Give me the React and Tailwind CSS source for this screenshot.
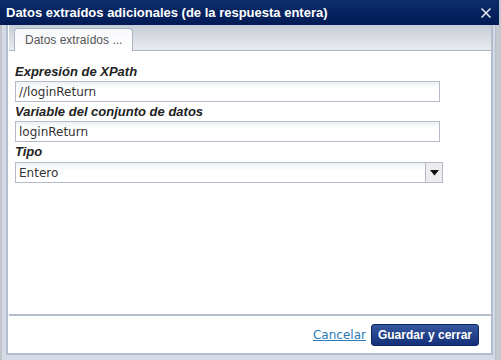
import React from "react";

function Label({ children }) {
  return (
    <label className="text-[13px] font-bold italic text-[#222] leading-[19px] h-[19px] [font-family:'Liberation_Sans',sans-serif]">
      {children}
    </label>
  );
}

function Field({ label, value }) {
  return (
    <div className="flex flex-col">
      <Label>{label}</Label>
      <div className="h-[21px] w-[425px] border border-[#b5bac9] bg-gradient-to-b from-[#eef0f2] to-white to-40% flex items-center pl-[3px] text-[12px] text-[#333] [font-family:'DejaVu_Sans',sans-serif]">
        {value}
      </div>
    </div>
  );
}

function SelectField({ label, value }) {
  return (
    <div className="flex flex-col">
      <Label>{label}</Label>
      <div className="mt-px h-[21px] w-[428px] border border-[#b5bac9] bg-gradient-to-b from-[#eef0f2] to-white to-40% flex items-center text-[12px] text-[#333] [font-family:'DejaVu_Sans',sans-serif]">
        <span className="flex-1 pl-[3px]">{value}</span>
        <span className="w-[17px] h-full border-l border-[#b5bac9] bg-[#ededed] flex items-center justify-center">
          <svg width="9" height="6" viewBox="0 0 9 6">
            <path d="M0 0h9L4.5 5.5z" fill="#111" />
          </svg>
        </span>
      </div>
    </div>
  );
}

export default function App() {
  return (
    <div className="w-[501px] h-[360px] bg-[#c4c8cf] flex overflow-hidden">
      <div className="w-[496px] h-[360px] flex flex-col bg-[#d5dbe6] border-l-2 border-[#c2c5cb] border-r border-r-[#b9c0cb]">
        {/* Title bar */}
        <div className="h-[25px] shrink-0 bg-gradient-to-b from-[#0e2d6a] to-[#021a55] flex items-center justify-between pl-[6px] pr-[8px] -ml-[2px] w-[499px]">
          <span className="text-white font-bold text-[13px] whitespace-nowrap [font-family:'Liberation_Sans',sans-serif]">
            Datos extraídos adicionales (de la respuesta entera)
          </span>
          <svg width="10" height="10" viewBox="0 0 10 10">
            <path d="M0.5 0.5L9.5 9.5M9.5 0.5L0.5 9.5" stroke="#e8ecf4" strokeWidth="1.5" />
          </svg>
        </div>

        {/* Body */}
        <div className="flex-1 flex flex-col ml-[4px] mr-[2px] mb-[5px] border-x-2 border-b-2 border-[#b3bdcc] bg-white">
          {/* Tab panel */}
          <div className="h-[291px] flex flex-col border-b-2 border-r-2 border-[#b3bdcc] ml-[1px] -mr-[2px]">
            <div className="h-[26px] shrink-0 bg-gradient-to-b from-[#c6ccd7] to-[#eaecef] border-b border-[#aab6c8] flex items-end pl-[5px]">
              <div className="h-[23px] w-[119px] -mb-px rounded-t-[4px] border border-b-0 border-[#a9b5c6] bg-gradient-to-b from-[#f6f7f9] to-white flex items-center pl-[10px] text-[12px] text-[#555] whitespace-nowrap [font-family:'Liberation_Sans',sans-serif]">
                Datos extraídos ...
              </div>
            </div>
            <div className="flex-1 bg-white pl-[6px] pt-[11px] flex flex-col">
              <Field label="Expresión de XPath" value="//loginReturn" />
              <Field label="Variable del conjunto de datos" value="loginReturn" />
              <SelectField label="Tipo" value="Entero" />
            </div>
          </div>
          {/* Footer */}
          <div className="flex-1 flex items-center justify-end pr-[12px] gap-[5px]">
            <a href="#" className="text-[12px] text-[#2a7bb5] underline [font-family:'DejaVu_Sans',sans-serif]">
              Cancelar
            </a>
            <button className="h-[22px] px-[6px] rounded-[3px] border border-[#0b2566] bg-gradient-to-b from-[#35579e] to-[#142f78] text-white font-bold text-[12px] whitespace-nowrap [font-family:'Liberation_Sans',sans-serif]">
              Guardar y cerrar
            </button>
          </div>
        </div>
      </div>
    </div>
  );
}
